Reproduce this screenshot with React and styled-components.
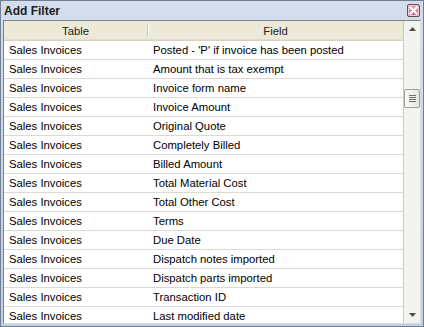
import React from "react";
import styled, { createGlobalStyle } from "styled-components";

const GlobalStyle = createGlobalStyle`
  html, body {
    margin: 0;
    padding: 0;
    background: #ffffff;
  }
  body {
    font-family: Tahoma, "Liberation Sans", "DejaVu Sans", sans-serif;
  }
`;

const rows = [
  "Posted - 'P' if invoice has been posted",
  "Amount that is tax exempt",
  "Invoice form name",
  "Invoice Amount",
  "Original Quote",
  "Completely Billed",
  "Billed Amount",
  "Total Material Cost",
  "Total Other Cost",
  "Terms",
  "Due Date",
  "Dispatch notes imported",
  "Dispatch parts imported",
  "Transaction ID",
  "Last modified date",
];

const App = () => {
  return (
    <>
      <GlobalStyle />
      <Window>
        <TitleBar>
          <Title>Add Filter</Title>
          <CloseButton>
            <svg width="9" height="9" viewBox="0 0 9 9">
              <path
                d="M1.5 1.5 L7.5 7.5 M7.5 1.5 L1.5 7.5"
                stroke="#ffffff"
                strokeWidth="2"
                strokeLinecap="square"
              />
            </svg>
          </CloseButton>
        </TitleBar>
        <Panel>
          <List>
            <HeaderRow>
              <HeaderCell>Table</HeaderCell>
              <HeaderCell $last>Field</HeaderCell>
            </HeaderRow>
            {rows.map((field, i) => (
              <Row key={i}>
                <TableCell>Sales Invoices</TableCell>
                <FieldCell>{field}</FieldCell>
              </Row>
            ))}
          </List>
          <ScrollBar>
            <Arrow>
              <svg width="7" height="4" viewBox="0 0 7 4">
                <path d="M0 4 L3.5 0 L7 4 Z" fill="#4d4d4d" />
              </svg>
            </Arrow>
            <Track>
              <Thumb>
                <Grip />
                <Grip />
                <Grip />
                <Grip />
              </Thumb>
            </Track>
            <Arrow>
              <svg width="7" height="4" viewBox="0 0 7 4">
                <path d="M0 0 L7 0 L3.5 4 Z" fill="#4d4d4d" />
              </svg>
            </Arrow>
          </ScrollBar>
        </Panel>
      </Window>
    </>
  );
};

const Window = styled.div`
  width: 424px;
  height: 327px;
  box-sizing: border-box;
  border: 1px solid #6f7f94;
  background: linear-gradient(to bottom, #d3ddeb 0%, #c1d0e4 100%);
  display: flex;
  flex-direction: column;
  overflow: hidden;
`;

const TitleBar = styled.div`
  height: 19px;
  display: flex;
  align-items: center;
  justify-content: space-between;
  padding: 0 3px 0 3px;
  flex-shrink: 0;
`;

const Title = styled.div`
  font-family: "Liberation Sans", Arial, sans-serif;
  font-size: 12px;
  font-weight: bold;
  color: #1e1e1e;
`;

const CloseButton = styled.div`
  width: 13px;
  height: 13px;
  box-sizing: border-box;
  border: 1px solid #6b4a55;
  border-radius: 2px;
  background: linear-gradient(to bottom, #e9a6b1, #c9707f);
  display: flex;
  align-items: center;
  justify-content: center;
  box-shadow: inset 0 0 0 1px #f4cbd2;
`;

const Panel = styled.div`
  flex: 1;
  margin: 0 2px 2px 2px;
  border: 1px solid #808080;
  border-right-color: #dcdcdc;
  border-bottom-color: #dcdcdc;
  background: #ffffff;
  display: flex;
  overflow: hidden;
`;

const List = styled.div`
  flex: 1;
  overflow: hidden;
  font-family: "Liberation Sans", Arial, sans-serif;
  font-size: 11.3px;
  color: #000000;
`;

const HeaderRow = styled.div`
  display: grid;
  grid-template-columns: 144px 1fr;
  height: 19px;
  background: #ece9d8;
  border-bottom: 1px solid #d6d2c2;
  box-shadow: inset 0 -1px 0 #e2ded0;
`;

const HeaderCell = styled.div`
  display: flex;
  align-items: center;
  justify-content: center;
  color: #222222;
  border-right: ${(p) => (p.$last ? "none" : "1px solid #c7c5b2")};
  box-shadow: ${(p) => (p.$last ? "none" : "1px 0 0 #ffffff")};
  margin: ${(p) => (p.$last ? "0" : "3px 0")};
`;

const Row = styled.div`
  display: grid;
  grid-template-columns: 144px 1fr;
  height: 18px;
  border-bottom: 1px solid #dcdad0;
  align-items: center;
`;

const TableCell = styled.div`
  padding-left: 5px;
  white-space: nowrap;
`;

const FieldCell = styled.div`
  padding-left: 5px;
  white-space: nowrap;
`;

const ScrollBar = styled.div`
  width: 16px;
  flex-shrink: 0;
  background: #f3f3ef;
  border-left: 1px solid #c9c9c2;
  display: flex;
  flex-direction: column;
`;

const Arrow = styled.div`
  height: 16px;
  display: flex;
  align-items: center;
  justify-content: center;
`;

const Track = styled.div`
  flex: 1;
  padding-top: 52px;
`;

const Thumb = styled.div`
  height: 19px;
  box-sizing: border-box;
  border: 1px solid #9d9d97;
  border-radius: 2px;
  background: linear-gradient(to right, #fbfbf9, #e4e4de);
  display: flex;
  flex-direction: column;
  align-items: center;
  justify-content: center;
  gap: 1px;
`;

const Grip = styled.div`
  width: 7px;
  height: 1px;
  background: #6e6e6e;
`;

export default App;
